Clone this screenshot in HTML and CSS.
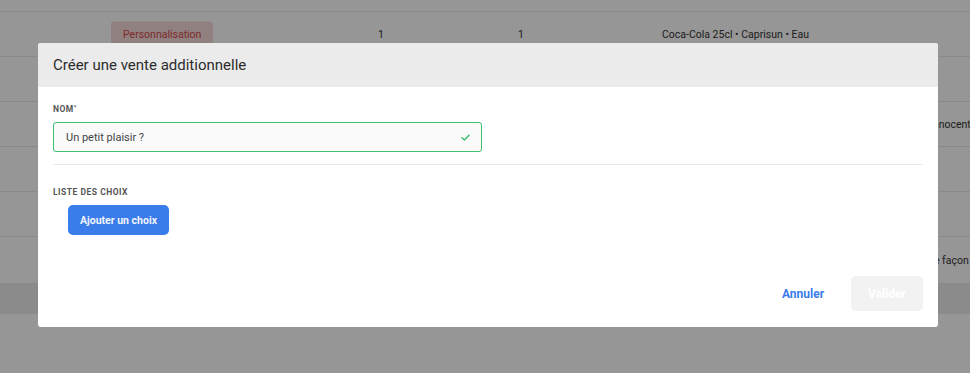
FILE: index.html
```html
<!DOCTYPE html>
<html lang="fr">
<head>
    <meta charset="UTF-8">
    <meta name="viewport" content="width=device-width, initial-scale=1.0">
    <title>Créer une vente additionnelle</title>
    <link rel="stylesheet" href="styles.css">
</head>
<body>
    <div class="page">
        <div class="row row-first"></div>
        <div class="row">
            <div class="cell cell-tag"><span class="tag">Personnalisation</span></div>
            <div class="cell cell-num">1</div>
            <div class="cell cell-num2">1</div>
            <div class="cell cell-items">Coca-Cola 25cl • Caprisun • Eau</div>
        </div>
        <div class="row"></div>
        <div class="row">
            <div class="cell cell-right">Innocent</div>
        </div>
        <div class="row"></div>
        <div class="row"></div>
        <div class="row">
            <div class="cell cell-right cell-right-2">de façon</div>
        </div>
        <div class="band"></div>
    </div>

    <div class="overlay"></div>

    <div class="modal">
        <div class="modal-header">
            <h2>Créer une vente additionnelle</h2>
        </div>
        <div class="modal-body">
            <label class="field-label" for="nom">Nom<sup>*</sup></label>
            <div class="input-wrap">
                <input type="text" id="nom" value="Un petit plaisir ?">
                <svg class="check" width="9" height="7" viewBox="0 0 9 7">
                    <path d="M1 3.8 L3.4 6 L8 1.2" fill="none" stroke="#3fbf6f" stroke-width="1.5" stroke-linecap="round" stroke-linejoin="round"/>
                </svg>
            </div>
            <div class="divider"></div>
            <div class="field-label">Liste des choix</div>
            <button class="btn-add">Ajouter un choix</button>
        </div>
        <div class="modal-footer">
            <button class="btn-cancel">Annuler</button>
            <button class="btn-submit" disabled>Valider</button>
        </div>
    </div>
</body>
</html>
```

FILE: styles.css
```css
* {
    margin: 0;
    padding: 0;
    box-sizing: border-box;
    font-family: Roboto, "Liberation Sans", Arial, sans-serif;
}

body {
    width: 970px;
    height: 373px;
    overflow: hidden;
    background: #fff;
    position: relative;
}

.page {
    width: 970px;
}

.row {
    height: 45px;
    border-bottom: 1px solid #e9e9e9;
    position: relative;
    font-size: 10.5px;
    color: #333;
}

.row-first {
    height: 12px;
}

.cell {
    position: absolute;
    top: 50%;
    transform: translateY(-50%);
    white-space: nowrap;
}

.cell-tag {
    left: 111px;
}

.tag {
    display: inline-block;
    background: #f7dada;
    color: #d44c4c;
    padding: 6px 12px;
    border-radius: 3px;
}

.cell-num {
    left: 378px;
}

.cell-num2 {
    left: 518px;
}

.cell-items {
    left: 662px;
}

.cell-right {
    left: 930px;
}

.cell-right-2 {
    left: 928px;
}

.row:nth-child(7) {
    height: 46px;
    border-bottom: none;
}

.band {
    height: 31px;
    background: #ededed;
}

.overlay {
    position: absolute;
    inset: 0;
    background: rgba(0, 0, 0, 0.41);
}

.modal {
    position: absolute;
    left: 38px;
    top: 43px;
    width: 900px;
    height: 284px;
    background: #fff;
    border-radius: 3px;
    overflow: hidden;
    display: flex;
    flex-direction: column;
}

.modal-header {
    height: 44px;
    background: #ebebeb;
    display: flex;
    align-items: center;
    padding: 0 15px;
}

.modal-header h2 {
    font-size: 15px;
    font-weight: 400;
    color: #2d2d2d;
}

.modal-body {
    padding: 17px 15px 0;
    flex: 1;
}

.field-label {
    display: block;
    font-size: 8.5px;
    font-weight: 700;
    letter-spacing: 0.5px;
    text-transform: uppercase;
    color: #555;
    line-height: 10px;
}

.field-label sup {
    font-size: 6px;
    vertical-align: top;
    line-height: 6px;
}

.input-wrap {
    position: relative;
    width: 429px;
    margin-top: 8px;
}

.input-wrap input {
    width: 100%;
    height: 30px;
    border: 1px solid #3fbf6f;
    border-radius: 3px;
    background: #fafafa;
    padding: 0 12px;
    font-size: 11px;
    color: #444;
    outline: none;
}

.check {
    position: absolute;
    right: 12px;
    top: 12px;
}

.divider {
    height: 1px;
    background: #e8e8e8;
    margin: 12px 0 22px;
}

.btn-add {
    margin: 8px 0 0 15px;
    width: 101px;
    height: 30px;
    border: none;
    border-radius: 5px;
    background: #3a7cea;
    color: #f0f4fc;
    font-size: 10.5px;
    font-weight: 700;
    cursor: pointer;
}

.modal-footer {
    display: flex;
    justify-content: flex-end;
    align-items: center;
    padding: 0 15px 16px;
}

.btn-cancel {
    background: none;
    border: none;
    color: #3a7cea;
    font-size: 12px;
    font-weight: 700;
    width: 84px;
    height: 35px;
    margin-right: 6px;
    cursor: pointer;
}

.btn-submit {
    width: 72px;
    height: 35px;
    border: none;
    border-radius: 5px;
    background: #f2f2f2;
    color: #fff;
    font-size: 12px;
    font-weight: 700;
}
```
